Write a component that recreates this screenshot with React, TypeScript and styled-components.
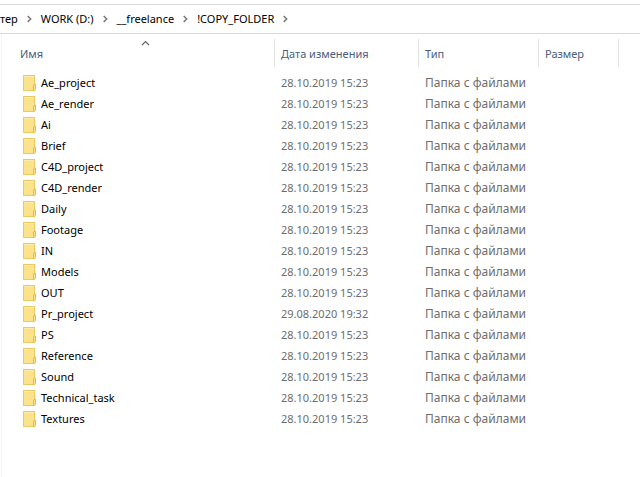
import React from 'react';
import styled, { createGlobalStyle } from 'styled-components';

const GlobalStyle = createGlobalStyle`
  body {
    margin: 0;
    background: #fff;
    color: #000;
    font: 11px/20px "Noto Sans", "Open Sans", sans-serif;
  }
`;

const Explorer = styled.main`
  min-height: 100vh;
  overflow: hidden;
`;

const AddressBar = styled.nav`
  margin-top: 4px;
  height: 28px;
  display: flex;
  align-items: center;
  border-top: 1px solid #d9d9d9;
  border-bottom: 1px solid #d9d9d9;
  white-space: nowrap;
`;

const Crumb = styled.a`
  color: #000;
  text-decoration: none;
`;

const CrumbArrow = styled.svg`
  flex: none;
  width: 5px;
  height: 8px;
  margin: 0 9px;
`;

const Pane = styled.section`
  margin-left: 1px;
  min-height: calc(100vh - 34px);
  border-left: 1px solid #f5f5f5;
`;

const FileTable = styled.table`
  width: 100%;
  table-layout: fixed;
  border-collapse: collapse;
`;

const Column = styled.col<{ $width?: number }>`
  width: ${({ $width }) => ($width ? `${$width}px` : 'auto')};
`;

const HeaderCell = styled.th`
  position: relative;
  height: 38px;
  padding: 0;
  font-weight: 400;
  text-align: left;
`;

const HeaderButton = styled.button<{ $first?: boolean }>`
  display: block;
  width: 100%;
  height: 28px;
  padding: 2px 0 0 ${({ $first }) => ($first ? 18 : 6)}px;
  border: 0;
  border-right: 1px solid #e2e2e2;
  background: none;
  color: #4a5d80;
  font: inherit;
  text-align: left;
`;

const SortMark = styled.svg`
  position: absolute;
  top: 6px;
  left: calc(50% + 2px);
  width: 9px;
  height: 6px;
`;

const Cell = styled.td`
  height: 21px;
  padding: 0 0 0 6px;
  color: #6d6d6d;
  white-space: nowrap;
`;

const TypeCell = styled(Cell)`
  font-size: 12px;
`;

const NameCell = styled(Cell)`
  padding-left: 21px;
  color: #000;
`;

const FileName = styled.div`
  display: flex;
  align-items: center;
  gap: 5px;
`;

const FolderSvg = styled.svg`
  flex: none;
  width: 13px;
  height: 16px;
`;

const FolderIcon = () => (
  <FolderSvg viewBox="0 0 13 16" aria-hidden="true">
    <rect x="0.5" y="0.5" width="11" height="15" fill="#fde28c" stroke="#e9c962" />
    <path d="M1 1h10v1H1z" fill="#ffeaa9" />
    <path d="M10.5 15.5V10l2-1v5.5l-1 1z" fill="#fce08a" stroke="#e3bd4c" />
  </FolderSvg>
);

const crumbs = ['тер', 'WORK (D:)', '__freelance', '!COPY_FOLDER'];
const headers = ['Имя', 'Дата изменения', 'Тип', 'Размер'];
const folders = [
  'Ae_project', 'Ae_render', 'Ai', 'Brief', 'C4D_project', 'C4D_render',
  'Daily', 'Footage', 'IN', 'Models', 'OUT', 'Pr_project', 'PS',
  'Reference', 'Sound', 'Technical_task', 'Textures',
].map((name) => ({
  name,
  date: name === 'Pr_project' ? '29.08.2020 19:32' : '28.10.2019 15:23',
}));

export default function App() {
  return (
    <Explorer>
      <GlobalStyle />
      <AddressBar>
        {crumbs.map((crumb) => (
          <React.Fragment key={crumb}>
            <Crumb href="#">{crumb}</Crumb>
            <CrumbArrow viewBox="0 0 5 8" aria-hidden="true">
              <path d="M0.7 1l3 3-3 3" fill="none" stroke="#777" strokeWidth="1.5" />
            </CrumbArrow>
          </React.Fragment>
        ))}
      </AddressBar>
      <Pane>
        <FileTable>
          <colgroup>
            <Column $width={273} />
            <Column $width={144} />
            <Column $width={120} />
            <Column $width={80} />
            <Column />
          </colgroup>
          <thead>
            <tr>
              {headers.map((header, i) => (
                <HeaderCell key={header} scope="col" aria-sort={i === 0 ? 'ascending' : undefined}>
                  {i === 0 && (
                    <SortMark viewBox="0 0 9 6" aria-hidden="true">
                      <path d="M1 5l3.5-3.5L8 5" fill="none" stroke="#666" strokeWidth="1.2" />
                    </SortMark>
                  )}
                  <HeaderButton type="button" $first={i === 0}>{header}</HeaderButton>
                </HeaderCell>
              ))}
            </tr>
          </thead>
          <tbody>
            {folders.map(({ name, date }) => (
              <tr key={name}>
                <NameCell>
                  <FileName><FolderIcon />{name}</FileName>
                </NameCell>
                <Cell>{date}</Cell>
                <TypeCell>Папка с файлами</TypeCell>
              </tr>
            ))}
          </tbody>
        </FileTable>
      </Pane>
    </Explorer>
  );
}
